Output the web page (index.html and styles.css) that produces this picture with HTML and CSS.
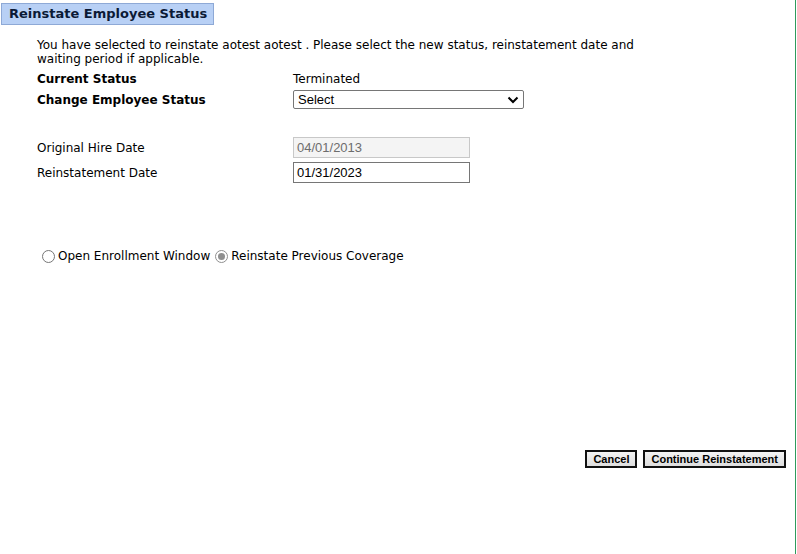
FILE: index.html
```html
<!DOCTYPE html>
<html>
<head>
<meta charset="utf-8">
<title>Reinstate Employee Status</title>
<link rel="stylesheet" href="styles.css">
</head>
<body>
<div class="page">
  <div class="title">Reinstate Employee Status</div>
  <div class="content">
    <p class="intro">You have selected to reinstate aotest aotest . Please select the new status, reinstatement date and waiting period if applicable.</p>
    <div class="grid">
      <div class="label bold">Current Status</div>
      <div class="value">Terminated</div>
      <div class="label bold">Change Employee Status</div>
      <div class="value">
        <div class="select"><span>Select</span>
          <svg width="12" height="8" viewBox="0 0 12 8"><path d="M1.5 1.5 L6 6 L10.5 1.5" fill="none" stroke="#000" stroke-width="2"/></svg>
        </div>
      </div>
    </div>
    <div class="grid dates">
      <div class="label">Original Hire Date</div>
      <div class="value"><div class="input disabled">04/01/2013</div></div>
      <div class="label">Reinstatement Date</div>
      <div class="value"><div class="input">01/31/2023</div></div>
    </div>
    <div class="radios">
      <span class="radio"></span><span class="rlabel">Open Enrollment Window</span>
      <span class="radio checked"></span><span class="rlabel">Reinstate Previous Coverage</span>
    </div>
  </div>
  <div class="buttons">
    <button class="btn">Cancel</button>
    <button class="btn">Continue Reinstatement</button>
  </div>
</div>
</body>
</html>
```

FILE: styles.css
```css
html, body {
  margin: 0;
  padding: 0;
  background: #fff;
}
.page {
  width: 796px;
  min-height: 554px;
  border-right: 1px solid #2f9a5c;
  font-family: "DejaVu Sans", Verdana, sans-serif;
  font-size: 12px;
  color: #000;
  padding-top: 3px;
  box-sizing: border-box;
}
.title {
  display: block;
  width: fit-content;
  margin-left: 1px;
  background: #b8d0f5;
  border: 1px solid #8ea9d6;
  font-size: 13px;
  font-weight: bold;
  color: #0b1a36;
  height: 20px;
  line-height: 20px;
  padding: 0 6px 0 7px;
}
.content {
  padding-left: 37px;
}
.intro {
  margin: 13px 0 0 0;
  width: 610px;
  line-height: 14px;
  color: #000;
}
.grid {
  display: grid;
  grid-template-columns: 256px auto;
  align-items: center;
  margin-top: 2px;
}
.grid .label, .grid .value {
  height: 21px;
  display: flex;
  align-items: center;
}
.bold { font-weight: bold; }
.select {
  width: 231px;
  height: 19px;
  box-sizing: border-box;
  border: 1px solid #767676;
  border-radius: 2px;
  display: flex;
  align-items: center;
  justify-content: space-between;
  padding: 0 4px 0 4px;
  font-family: "Liberation Sans", Arial, sans-serif;
  font-size: 13px;
}
.dates {
  margin-top: 27px;
  row-gap: 4px;
}
.input {
  width: 177px;
  height: 21px;
  box-sizing: border-box;
  border: 1px solid #767676;
  padding: 0 3px;
  display: flex;
  align-items: center;
  font-family: "Liberation Sans", Arial, sans-serif;
  font-size: 13px;
}
.input.disabled {
  background: #f4f4f4;
  border-color: #c8c8c8;
  color: #6d6d6d;
}
.radios {
  margin-top: 65px;
  margin-left: 5px;
  display: flex;
  align-items: center;
  height: 16px;
}
.radio {
  width: 11px;
  height: 11px;
  border: 1px solid #767676;
  border-radius: 50%;
  box-sizing: content-box;
  margin-right: 3px;
  position: relative;
}
.radio.checked {
  border-color: #8f8f8f;
}
.radio.checked::after {
  content: "";
  position: absolute;
  left: 2px;
  top: 2px;
  width: 7px;
  height: 7px;
  border-radius: 50%;
  background: #8f8f8f;
}
.rlabel {
  margin-right: 5px;
}
.buttons {
  display: flex;
  justify-content: flex-end;
  gap: 6px;
  margin-top: 186px;
  padding-right: 9px;
}
.btn {
  font-family: "Liberation Sans", Arial, sans-serif;
  font-size: 11px;
  font-weight: bold;
  height: 18px;
  box-sizing: border-box;
  padding: 0 6px;
  border: 2px solid #111;
  background: linear-gradient(#f4f4f4, #dedede);
  color: #000;
  margin: 0;
  line-height: 14px;
}
```
